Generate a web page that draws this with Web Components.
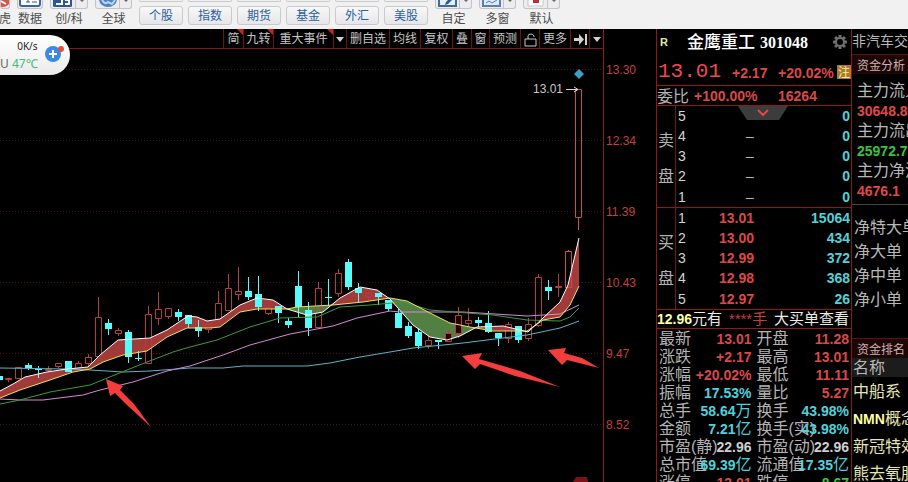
<!DOCTYPE html>
<html lang="zh-CN">
<head>
<meta charset="utf-8">
<title>金鹰重工 301048</title>
<style>
html, body { height: 100%; margin: 0; background: #000; }
body { font-family: "Liberation Sans", "Noto Sans CJK SC", sans-serif; overflow: hidden; }
</style>
</head>
<body>
<stock-app></stock-app>
<script>
const mount = (el, html) => { el.attachShadow({ mode: 'open' }).innerHTML = html; };

class RibbonTool extends HTMLElement {
  connectedCallback() {
    mount(this, `<style>
      :host { display: block; flex: none; }
      button { display: flex; flex-direction: column; align-items: center; width: 100%; height: 29px; padding: 0; border: 0; background: none; font: inherit; color: #4c4c4c; }
      .icon { display: flex; box-sizing: border-box; width: 100%; height: 9px; border: 1px solid #c4c4c8; border-top: 0; border-radius: 0 0 3px 3px; background: #ececee; overflow: hidden; }
      .face { flex: 1; display: flex; justify-content: center; align-items: flex-start; }
      .drop { width: 11px; border-left: 1px solid #c4c4c8; }
      .drop svg { display: block; margin: 0 auto; }
      .label { white-space: nowrap; line-height: 20px; font-size: 12px; }
    </style>
    <button type="button"><span class="icon"><span class="face"><slot name="icon"></slot></span>${this.hasAttribute('menu') ? '<span class="drop"><svg width="6" height="4"><path d="M1 0h4L3 2z" fill="#666"/></svg></span>' : ''}</span><span class="label"><slot></slot></span></button>`);
  }
}
customElements.define('ribbon-tool', RibbonTool);

class TopRibbon extends HTMLElement {
  connectedCallback() {
    mount(this, `<style>
      :host { display: flex; gap: 7px; height: 29px; background: #f1f1f1; overflow: hidden; font-size: 12px; }
      .w10 { width: 10px; } .w26 { width: 26px; } .w38 { width: 38px; } .w37 { width: 37px; }
      nav { display: grid; grid-template-columns: repeat(6, 44px); grid-template-rows: 2px 19px; gap: 4px 5px; }
      nav button, nav i { box-sizing: border-box; border: 1px solid #c9cacd; border-radius: 3px; background: linear-gradient(#f8f8f9, #e6e6e8); }
      nav button { padding: 1px 0 0; font: inherit; line-height: 16px; color: #2a5f9f; }
      nav i { border-top: 0; border-radius: 0 0 3px 3px; }
      svg { display: block; flex: none; }
    </style>
    <ribbon-tool class="w10"><svg slot="icon" width="10" height="8"><circle cx="2" cy="0" r="7" fill="#d95345"/><path d="M0 1l5 3" stroke="#fff" stroke-width="2"/></svg>虎</ribbon-tool>
    <ribbon-tool class="w26"><svg slot="icon" width="22" height="8"><path d="M1 0v4q0 2 2 2h16q2 0 2-2V0" fill="#fff" stroke="#3866a4" stroke-width="2"/><path d="M7 2h4M9 0v2M13 2h5" stroke="#29588f" stroke-width="1" fill="none"/></svg>数据</ribbon-tool>
    <ribbon-tool class="w38" menu><svg slot="icon" width="20" height="8"><path d="M0 0h19v6q0 1-2 1H2q-2 0-2-1z" fill="#2b5799"/><path d="M3 4h6V0M12 0h4v4h-4" stroke="#fff" stroke-width="2" fill="none"/></svg>创/科</ribbon-tool>
    <ribbon-tool class="w37" menu><svg slot="icon" width="22" height="8"><ellipse cx="11" cy="-1" rx="9" ry="8" fill="#4b82bf"/><path d="M5 0q3 5 6 2l4 2 3-4" stroke="#b9d7ef" stroke-width="2" fill="none"/></svg>全球</ribbon-tool>
    <nav><i></i><i></i><i></i><i></i><i></i><i></i>${['个股', '指数', '期货', '基金', '外汇', '美股'].map(t => `<button type="button">${t}</button>`).join('')}</nav>
    <ribbon-tool class="w37" menu><svg slot="icon" width="20" height="8"><path d="M1 0v6h17V0" fill="#e6f0fa" stroke="#3f6ba5" stroke-width="2"/><path d="M7 5l1-3 4-4 2 2-4 4z" fill="#2a5b98"/></svg>自定</ribbon-tool>
    <ribbon-tool class="w37" menu><svg slot="icon" width="20" height="8"><path d="M1 0v6h17V0" fill="#dceafa" stroke="#5b7fb5" stroke-width="2"/><path d="M4 3l3-2 3 2 5-3" stroke="#5b7fb5" fill="none"/></svg>多窗</ribbon-tool>
    <ribbon-tool class="w37" menu><svg slot="icon" width="20" height="8"><path d="M2 0v6h15V0" fill="#fff" stroke="#c7c7c7"/><path d="M7 0h6v3H7z" fill="#c02c31"/></svg>默认</ribbon-tool>`);
  }
}
customElements.define('top-ribbon', TopRibbon);

class ChartToolbar extends HTMLElement {
  connectedCallback() {
    const down = '<svg width="8" height="5"><path d="M0 0h8L4 5z" fill="#d0d0d0"/></svg>';
    const lock = '<svg width="13" height="14"><path d="M1 6h11v7H1zM4 6V3q0-2 3-2 2 0 3 2v1" fill="none" stroke="#c8c8c8"/></svg>';
    const next = '<svg width="13" height="13"><path d="M0 5h5V1l5 5.500-5 5.500V8H0zM11 1h2v11h-2z" fill="#d0d0d0"/></svg>';
    const items = [['简', 20, 1], ['九转', 30, 1], ['重大事件', 60, 1], [down, 13, 0, '事件菜单'], ['删自选', 43], ['均线', 31], ['复权', 32], ['叠', 19], ['窗', 18], ['预测', 31], [lock, 19, 0, '锁定'], ['更多', 31], [next, 19, 0, '下一个'], [down, 15, 0, '菜单']];
    mount(this, `<style>
      :host { display: flex; justify-content: flex-end; height: 20px; box-sizing: border-box; padding-right: 52px; background: linear-gradient(#801818, #801818) left bottom / calc(100% - 52px) 1px no-repeat; }
      button { position: relative; flex: none; box-sizing: border-box; display: flex; align-items: center; justify-content: center; height: 19px; padding: 2px 0 0; border: 0; border-left: 1px solid #6a1414; background: none; color: #c6c6c6; font: 12px/17px "Liberation Sans", "Noto Sans CJK SC", sans-serif; white-space: nowrap; }
      button:last-child { border-right: 1px solid #a01818; }
      .new::after { content: ""; position: absolute; top: 0; right: 0; border: 3px solid; border-color: #d02020 #d02020 transparent transparent; }
    </style>${items.map(([t, w, n, a]) => `<button type="button" style="width:${w}px"${n ? ' class="new"' : ''}${a ? ` aria-label="${a}"` : ''}>${t}</button>`).join('')}`);
  }
}
customElements.define('chart-toolbar', ChartToolbar);

class SpeedWidget extends HTMLElement {
  connectedCallback() {
    mount(this, `<style>
      :host { position: absolute; left: 0; top: 6px; display: flex; align-items: center; gap: 7px; box-sizing: border-box; height: 40px; padding-right: 5px; border-radius: 0 20px 20px 0; background: linear-gradient(#fff, #ebebeb); font: 10px/18px "Noto Sans", sans-serif; color: #222; }
      div { text-align: right; white-space: nowrap; }
      p { margin: 0; }
      .t { font-size: 12px; color: #666; } b { font-weight: 400; color: #42bb72; }
      svg { display: block; }
    </style>
    <div><p>0K/s</p><p class="t">U <b>47℃</b></p></div>
    <svg width="20" height="22"><circle cx="8" cy="10" r="8" fill="#3b8ae6"/><path d="M8 6v8M4 10h8" stroke="#fff" stroke-width="2"/><circle cx="16" cy="5" r="3" fill="#e0523c"/></svg>`);
  }
}
customElements.define('speed-widget', SpeedWidget);

/* Price chart: candles, five averages and the band between the two fastest ones. */
const UP = 1, DOWN = 0;
// centre x, direction, body top, body bottom, wick top, wick bottom
const CANDLES = [
  [-1,DOWN,376,380,376,380],[8,UP,378,379,378,382],[18,UP,367,378,367,379],[28,DOWN,365,368,363,370],[38,DOWN,369,370,366,378],
  [48,UP,369,370,366,373],[58,UP,363,366,363,368],[68,DOWN,361,372,361,372],[78,UP,363,368,361,368],[88,UP,357,363,354,366],
  [98,UP,317,356,297,356],[108,DOWN,323,329,319,335],[118,UP,330,333,328,336],[128,DOWN,332,357,330,363],[138,DOWN,358,359,351,361],
  [148,UP,314,363,306,363],[158,UP,309,318,292,325],[168,UP,308,316,308,319],[178,DOWN,312,317,309,321],[188,DOWN,315,324,315,328],
  [198,DOWN,327,331,320,337],[208,UP,324,329,324,333],[218,UP,303,319,291,319],[228,UP,288,310,274,310],[238,UP,291,294,267,300],
  [248,DOWN,291,297,277,300],[258,DOWN,294,307,276,311],[268,UP,307,313,305,315],[278,DOWN,306,313,306,323],[288,DOWN,321,325,318,328],
  [298,DOWN,286,307,271,317],[308,DOWN,310,328,302,336],[318,UP,288,327,282,327],[328,DOWN,297,298,279,306],[338,UP,273,293,269,297],
  [348,DOWN,262,287,259,290],[358,DOWN,288,293,283,302],[368,UP,293,296,293,301],[378,DOWN,293,297,293,305],[388,DOWN,300,309,300,311],
  [398,DOWN,313,328,309,328],[408,DOWN,326,336,322,338],[418,DOWN,332,346,328,349],[428,UP,340,345,335,349],[438,DOWN,340,342,340,349],
  [448,UP,333,341,331,342,1],[458,UP,315,333,307,338,1],[468,UP,320,323,308,327],[478,DOWN,320,323,317,327],[488,DOWN,323,332,311,333],
  [498,DOWN,333,338,333,346],[508,UP,324,338,322,343],[518,DOWN,326,340,326,343],[528,UP,324,338,318,341],[538,UP,277,325,274,327],
  [548,DOWN,287,291,280,300],[558,UP,286,287,274,297],[568,UP,251,287,250,287],[578,UP,89,217,89,230]
];
const WHITE = [[0,391],[13,384],[25,377],[47,372],[67,369],[88,367],[100,355],[118,340],[150,338],[167,330],[188,316],[197,317],[207,321],[220,319],[240,305],[257,298],[273,300],[287,309],[307,315],[323,312],[340,298],[360,287],[377,290],[390,299],[397,307],[413,325],[430,337],[447,340],[460,336],[477,327],[503,326],[520,330],[528,332],[543,318],[560,302],[568,285],[579,238]];
const YELLOW = [[0,398],[20,390],[50,380],[73,372],[90,369],[103,362],[123,355],[147,351],[167,337],[187,328],[210,328],[220,327],[240,312],[257,309],[287,309],[297,307],[333,305],[363,302],[390,298],[407,301],[430,313],[450,323],[470,327],[493,331],[527,331],[543,320],[560,317],[570,305],[579,286]];
const GREEN = [[0,404],[20,400],[50,392],[90,385],[127,370],[147,362],[173,352],[190,347],[217,340],[250,327],[280,318],[317,317],[340,307],[370,305],[403,302],[430,310],[493,315],[527,320],[560,321],[570,317],[579,308]];
const PURPLE = [[0,399],[20,400],[43,400],[83,395],[100,390],[133,382],[167,371],[190,366],[223,355],[250,345],[290,334],[333,326],[357,318],[390,311],[400,312],[463,312],[527,316],[560,314],[579,305]];
const BLUE = [[0,368],[67,369],[90,370],[123,372],[150,371],[190,368],[223,368],[243,366],[307,366],[330,363],[360,357],[390,352],[413,348],[463,343],[527,335],[560,328],[579,321]];
const at = (pts, x) => {
  const i = Math.max(1, pts.findIndex(p => p[0] >= x));
  const [a, b] = [pts[i - 1], pts[i]];
  return a[1] + (b[1] - a[1]) * (x - a[0]) / (b[0] - a[0]);
};
const line = (pts, color) => `<polyline points="${pts.join(' ')}" fill="none" stroke="${color}"/>`;

class PriceChart extends HTMLElement {
  band() {
    let out = '', run = [], sign = null;
    const flush = () => {
      // White runs below yellow on screen when the fast average is the weaker one: that stretch is green.
      if (run.length > 1) out += `<polygon fill="${sign ? '#527f42' : '#a23a3a'}" points="${run.map(x => [x, at(WHITE, x)]).concat(run.slice().reverse().map(x => [x, at(YELLOW, x)])).join(' ')}"/>`;
    };
    for (let x = 0; x < 580; x++) {
      const s = at(WHITE, x) > at(YELLOW, x);
      if (sign !== null && s !== sign) { run.push(x); flush(); run = []; }
      sign = s; run.push(x);
    }
    flush();
    return out;
  }
  candles() {
    return CANDLES.map(([x, d, t, b, h, l, solid]) => {
      const c = x + 0.5;
      if (d === DOWN) return `<path d="M${c} ${h}V${l}" stroke="#54fcfc"/><path d="M${x - 3} ${t}h7V${b}h-7z" fill="#54fcfc"/>`;
      return `<path d="M${c} ${h}V${t}M${c} ${b}V${l}M${x - 2.5} ${t + .5}h6V${b + .5}h-6z" fill="${solid ? '#200000' : 'none'}" stroke="${x > 560 ? '#d04a4e' : '#b83c3c'}"/>`;
    }).join('');
  }
  connectedCallback() {
    const ticks = [['13.30', 69], ['12.34', 140], ['11.39', 211], ['10.43', 282], ['9.47', 353], ['8.52', 424]];
    mount(this, `<style>
      :host { display: block; min-height: 0; overflow: hidden; }
      svg { display: block; width: 100%; height: 100%; }
      text { font: 12px "Liberation Sans", sans-serif; }
    </style>
    <svg viewBox="0 49 656 433" preserveAspectRatio="xMinYMin slice" role="img" aria-label="日K线">
      ${ticks.map(([, y]) => `<path d="M0 ${y}.5H603" stroke="#4a1010" stroke-dasharray="1 2"/>`).join('')}
      <path d="M603.5 49V482" stroke="#901c1c"/>
      ${ticks.map(([t, y]) => `<text x="606" y="${y + 5}" fill="#c4403e">${t}</text>`).join('')}
      ${this.band()}${this.candles()}
      ${line(BLUE, '#5cb4cc')}${line(PURPLE, '#d888d8')}${line(GREEN, '#3c9c3c')}${line(YELLOW, '#f0e060')}${line(WHITE, '#fff')}
      <path d="M579 69l5 5-5 5-5-5z" fill="#3f9cc4"/>
      <text x="533" y="93" fill="#c8c8c8">13.01</text>
      <path d="M566 89.500h12M574 87l4 2.500-4 2.500" fill="none" stroke="#d8d8d8"/>
      <g fill="#f53d3d"><path d="M106 379L123 386 120 390 134 404 151 427 128 406 115 393 110 396z"/><path d="M462 356L482 353 479 359 520 371 560 387 515 376 480 364 475 369z"/><path d="M548 350L566 348 564 353 582 358 599 368 567 360 562 365z"/></g>
      <path d="M576 477h11l1 5h-15z" fill="#7c1218"/>
    </svg>`);
  }
}
customElements.define('price-chart', PriceChart);

class OrderBook extends HTMLElement {
  connectedCallback() {
    const rows = JSON.parse(this.getAttribute('rows'));
    const side = this.getAttribute('side');
    mount(this, `<style>
      :host { display: block; border-bottom: 1px solid #8c1818; font-size: 14px; }
      table { width: 100%; table-layout: fixed; border-collapse: collapse; }
      td, th { height: 20px; padding: 0; line-height: 20px; }
      .side { width: 18px; border-right: 1px solid #701414; font: 16px/36px "Noto Sans CJK SC", sans-serif; color: #b4b4b4; }
      .side span { display: block; }
      .n { width: 41px; padding-left: 2px; text-align: left; font-weight: 400; color: #d4d4d4; }
      .p { font-weight: 700; color: #dc4848; }
      .none { padding-left: 27px; font-weight: 400; color: #b8b8b8; }
      .v { padding-right: 1px; text-align: right; font-weight: 700; color: #4ed2dc; }
      tr:last-child > * { height: 21px; }
    </style>
    <table>${rows.map(([n, p, v], i) => `<tr>${i ? '' : `<th class="side" rowspan="5">${[...side].map(c => `<span>${c}</span>`).join('')}</th>`}<th class="n">${n}</th><td class="p${p.length < 2 ? ' none' : ''}">${p}</td><td class="v">${v}</td></tr>`).join('')}</table>`);
  }
}
customElements.define('order-book', OrderBook);

class StatCell extends HTMLElement {
  connectedCallback() {
    mount(this, `<style>
      :host { display: grid; height: 18px; line-height: 18px; white-space: nowrap; color: #b4b4b4; font-size: 16px; }
      span, b { grid-area: 1 / 1; }
      b { justify-self: end; font-size: 14px; color: var(--tone); }
      i { font-style: normal; font-weight: 400; font-size: 16px; line-height: 0; }
    </style><span>${this.getAttribute('label')}</span><b><slot></slot>${this.hasAttribute('unit') ? `<i>${this.getAttribute('unit')}</i>` : ''}</b>`);
  }
}
customElements.define('stat-cell', StatCell);

class QuotePanel extends HTMLElement {
  connectedCallback() {
    const R = '#dc4848', C = '#4ed2dc', W = '#cfcfcf', G = '#3cc43c';
    const stats = [['最新','13.01',R],['开盘','11.28',R],['涨跌','+2.17',R],['最高','13.01',R],['涨幅','+20.02%',R],['最低','11.11',R],['振幅','17.53%',C],['量比','5.27',R],['总手','58.64',C,'万'],['换手','43.98%',C],['金额','7.21',C,'亿'],['换手(实)','43.98%',C],['市盈(静)','22.96',W],['市盈(动)','22.96',W],['总市值','69.39',C,'亿'],['流通值','17.35',C,'亿'],['涨停','13.01',R],['跌停','8.67',G]];
    const teeth = [0, 45, 90, 135].map(a => `<path d="M-1.500-7h3V7h-3z" transform="rotate(${a})"/>`).join('');
    mount(this, `<style>
      :host { display: block; box-sizing: border-box; border: solid #8c1818; border-width: 0 1px; overflow: hidden; font-size: 14px; }
      header { display: flex; align-items: center; height: 26px; padding: 0 4px 0 3px; color: #fff; }
      .r { width: 27px; font-size: 11px; color: #e8e8a0; }
      h1 { flex: 1; display: flex; align-items: baseline; gap: 5px; margin: 0; font: 500 17px/26px "Noto Sans CJK SC", sans-serif; white-space: nowrap; }
      h1 span { font: 700 16px/26px "Liberation Serif", serif; }
      header button, .tab { padding: 0; border: 0; background: none; }
      svg { display: block; }
      .price { display: flex; align-items: center; height: 30px; border-bottom: 1px solid #8c1818; padding-left: 1px; color: #dc4848; font-weight: 700; }
      .last { width: 74px; padding-top: 4px; font: 21px/26px "Liberation Mono", monospace; color: #ec4a4a; }
      .chg { width: 46px; }
      .pct { flex: 1; }
      .chg, .pct { padding-top: 6px; }
      mark { margin-top: 4px; width: 14px; background: #a87c28; color: #ffe9a0; font: 12px/14px "Noto Sans CJK SC", sans-serif; text-align: center; }
      .ratio { display: flex; align-items: center; height: 19px; border-bottom: 1px solid #8c1818; color: #dc4848; font-weight: 700; }
      .ratio span { flex: none; width: 37px; font: 16px/19px "Noto Sans CJK SC", sans-serif; color: #b4b4b4; }
      .ratio b { flex: none; min-width: 84px; }
      .ratio b + b { min-width: 0; }
      .asks { position: relative; }
      .tab { position: absolute; left: 81px; top: 0; }
      .note { display: flex; justify-content: space-between; height: 18px; padding-right: 2px; border-bottom: 1px solid #8c1818; line-height: 18px; font-size: 15px; color: #ecece0; white-space: nowrap; }
      .note b { font-size: 14px; color: #ffffa0; }
      .note em { font-style: normal; color: #c83c3c; }
      .stats { display: grid; grid-template-columns: 1fr 1fr; column-gap: 5px; padding: 1px 2px 0 2px; }
    </style>
    <header><span class="r"><b>R</b></span><h1>金鹰重工<span>301048</span></h1><button type="button" aria-label="设置"><svg width="14" height="14" viewBox="-7 -7 14 14" fill="#707070">${teeth}<circle r="4" fill="none" stroke="#707070" stroke-width="2"/><circle r="3" fill="#000"/></svg></button></header>
    <div class="price"><span class="last">13.01</span><span class="chg">+2.17</span><span class="pct">+20.02%</span><mark>注</mark></div>
    <div class="ratio"><span>委比</span><b>+100.00%</b><b>16264</b></div>
    <div class="asks"><order-book side="卖盘" rows='[["5","","0"],["4","–","0"],["3","–","0"],["2","–","0"],["1","–","0"]]'></order-book>
      <button class="tab" type="button" aria-label="展开"><svg width="50" height="14"><path d="M0 0h50l-9 14H9z" fill="#3c3c3c"/><path d="M20 4l5 5 5-5" fill="none" stroke="#e04848" stroke-width="2"/></svg></button></div>
    <order-book side="买盘" rows='[["1","13.01","15064"],["2","13.00","434"],["3","12.99","372"],["4","12.98","368"],["5","12.97","26"]]'></order-book>
    <div class="note"><span><b>12.96</b>元有</span><em>****手</em><span>大买单查看</span></div>
    <div class="stats">${stats.map(([l, v, c, u]) => `<stat-cell label="${l}" style="--tone:${c}"${u ? ` unit="${u}"` : ''}>${v}</stat-cell>`).join('')}</div>`);
  }
}
customElements.define('quote-panel', QuotePanel);

class SidePanel extends HTMLElement {
  connectedCallback() {
    mount(this, `<style>
      :host { display: block; overflow: hidden; white-space: nowrap; font-size: 16px; color: #b8b8b8; }
      .sector { height: 25px; line-height: 25px; font-size: 14px; }
      h2 { height: 20px; margin: 0; padding-left: 5px; box-sizing: border-box; border-top: 1px solid #5c1010; background: #1e0606; font: 12px/20px "Noto Sans CJK SC", sans-serif; color: #c8b4b4; }
      dl { margin: 0; padding: 7px 0 3px 5px; line-height: 20px; border-bottom: 1px solid #444; }
      dd { margin: 0; font-size: 14px; font-weight: 700; color: #e04848; }
      .g { color: #3cc43c; }
      ul { margin: 0; padding: 0 0 0 2px; list-style: none; }
      .net { padding-top: 11px; padding-bottom: 26px; line-height: 24px; }
      .head { height: 19px; padding-left: 1px; background: #1c1c1c; line-height: 19px; }
      .list { padding: 1px 0 0 1px; line-height: 27px; color: #e6e6b4; }
      .list b { font-size: 14px; color: #ffffa0; }
    </style>
    <div class="sector">非汽车交</div>
    <h2>资金分析</h2>
    <dl><dt>主力流入</dt><dd>30648.8</dd><dt>主力流出</dt><dd class="g">25972.7</dd><dt>主力净流</dt><dd>4676.1</dd></dl>
    <ul class="net"><li>净特大单</li><li>净大单</li><li>净中单</li><li>净小单</li></ul>
    <h2>资金排名</h2>
    <div class="head">名称</div>
    <ul class="list"><li>中船系</li><li><b>NMN</b>概念</li><li>新冠特效</li><li>熊去氧胆</li></ul>`);
  }
}
customElements.define('side-panel', SidePanel);

class StockApp extends HTMLElement {
  connectedCallback() {
    mount(this, `<style>
      :host { display: flex; flex-direction: column; height: 100vh; overflow: hidden; background: #000; }
      top-ribbon { flex: none; }
      main { flex: 1; min-height: 0; display: grid; grid-template-columns: minmax(0, 1fr) 196px 56px; grid-template-rows: minmax(0, 1fr); }
      section { position: relative; display: flex; flex-direction: column; min-width: 0; }
      price-chart { flex: 1; }
    </style>
    <top-ribbon></top-ribbon>
    <main><section><chart-toolbar></chart-toolbar><price-chart></price-chart><speed-widget></speed-widget></section><quote-panel></quote-panel><side-panel></side-panel></main>`);
  }
}
customElements.define('stock-app', StockApp);
</script>
</body>
</html>
